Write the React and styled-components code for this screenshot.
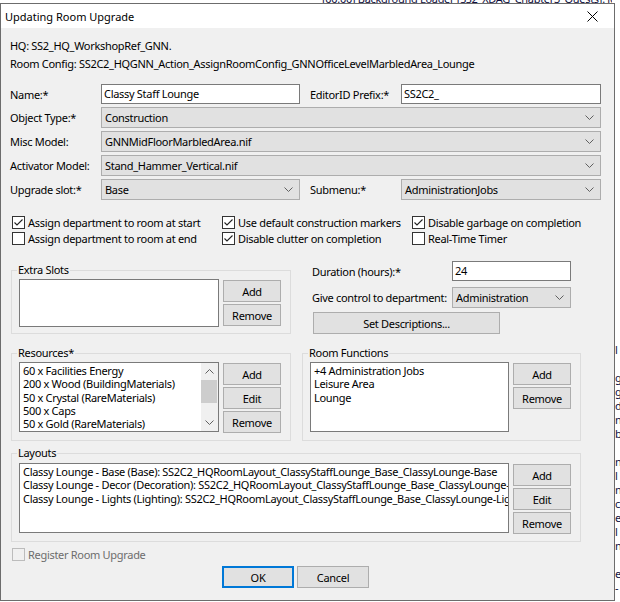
import React from 'react';
import styled, { createGlobalStyle } from 'styled-components';

const uiFont = '"Noto Sans", "DejaVu Sans", sans-serif';

const GlobalStyle = createGlobalStyle`
  html, body {
    margin: 0;
    padding: 0;
    background: #ffffff;
  }
  body {
    font-family: ${uiFont};
    font-size: 11px;
    letter-spacing: -0.3px;
    color: #000;
    overflow: hidden;
  }
  #root {
    position: relative;
    width: 620px;
    height: 602px;
    overflow: hidden;
  }
`;

// bits of the log window behind the dialog
const BgTop = styled.div`
  position: absolute;
  left: 322px;
  top: 0;
  width: 290px;
  height: 3px;
  overflow: hidden;
  color: #101040;
  white-space: nowrap;
`;

const BgTopText = styled.div`
  margin-top: -8px;
  line-height: 13px;
`;

const BgStrip = styled.div`
  position: absolute;
  left: 615px;
  top: 343px;
  width: 5px;
  overflow: hidden;
  line-height: 14px;
  color: #101040;
  white-space: pre;
`;

const Window = styled.div`
  position: absolute;
  left: 0;
  top: 3px;
  width: 615px;
  height: 598px;
  box-sizing: border-box;
  border: 1px solid #6c6c6c;
  background: #f0f0f0;
  display: flex;
  flex-direction: column;
`;

const TitleBar = styled.div`
  height: 24px;
  background: #ffffff;
  display: flex;
  align-items: center;
  justify-content: space-between;
  padding-left: 4px;
  letter-spacing: 0;
`;

const CloseBtn = styled.div`
  width: 46px;
  height: 24px;
  display: flex;
  align-items: center;
  justify-content: center;
  margin-right: -1px;
`;

const Body = styled.div`
  flex: 1;
  padding: 9px 9px 0 9px;
`;

const InfoLine = styled.div`
  height: 18px;
  line-height: 18px;
  white-space: nowrap;
`;

const Form = styled.div`
  margin-top: 11px;
  display: flex;
  flex-direction: column;
  gap: 3px;
`;

const Row = styled.div`
  display: flex;
  align-items: center;
  height: ${p => p.$h || 21}px;
`;

const Label = styled.div`
  width: ${p => p.$w || 91}px;
  margin-left: ${p => p.$ml || 0}px;
  flex-shrink: 0;
  white-space: nowrap;
`;

const TextInput = styled.div`
  width: ${p => p.$w}px;
  height: 20px;
  box-sizing: border-box;
  border: 1px solid #7a7a7a;
  background: #ffffff;
  padding-left: 2px;
  line-height: 18px;
  white-space: nowrap;
`;

const Combo = styled.div`
  width: ${p => p.$w}px;
  height: 21px;
  box-sizing: border-box;
  border: 1px solid #adadad;
  background: #e1e1e1;
  display: flex;
  align-items: center;
  justify-content: space-between;
  padding: 0 6px 0 3px;
  white-space: nowrap;
`;

const Chevron = ({ up }) => (
  <svg width="9" height="5" viewBox="0 0 9 5">
    <polyline
      points={up ? '0.5,4.5 4.5,0.5 8.5,4.5' : '0.5,0.5 4.5,4.5 8.5,0.5'}
      fill="none"
      stroke="#606060"
      strokeWidth="1"
    />
  </svg>
);

const ComboBox = ({ w, value }) => (
  <Combo $w={w}>
    <span>{value}</span>
    <Chevron />
  </Combo>
);

const Checks = styled.div`
  margin-top: 14px;
  padding-left: 2px;
  display: grid;
  grid-template-columns: 210px 190px 1fr;
  grid-auto-rows: 16px;
`;

const CheckRow = styled.div`
  display: flex;
  align-items: center;
  gap: 3px;
  white-space: nowrap;
  color: ${p => (p.$disabled ? '#6d6d6d' : '#000')};
`;

const Box = styled.div`
  width: 13px;
  height: 13px;
  box-sizing: border-box;
  border: 1px solid ${p => (p.$disabled ? '#bcbcbc' : '#333333')};
  background: ${p => (p.$disabled ? '#f0f0f0' : '#ffffff')};
  display: flex;
  align-items: center;
  justify-content: center;
`;

const CheckBox = ({ checked, disabled, children }) => (
  <CheckRow $disabled={disabled}>
    <Box $disabled={disabled}>
      {checked && (
        <svg width="11" height="11" viewBox="0 0 11 11">
          <polyline points="1.5,5.5 4,8 9.5,2.5" fill="none" stroke="#222" strokeWidth="1.1" />
        </svg>
      )}
    </Box>
    {children}
  </CheckRow>
);

const Section = styled.div`
  display: flex;
  margin-top: ${p => p.$mt}px;
  gap: ${p => p.$gap || 0}px;
  padding-left: 1px;
`;

const Group = styled.fieldset`
  margin: 0;
  padding: 0;
  width: ${p => p.$w}px;
  box-sizing: border-box;
  border: 1px solid #dcdcdc;
  border-radius: 0;
  min-width: 0;
`;

const Legend = styled.legend`
  padding: 0 1px;
  margin-left: 5px;
  line-height: 14px;
  font-size: 11px;
`;

const GroupInner = styled.div`
  display: flex;
  gap: 4px;
  padding: ${p => p.$pt || 2}px 9px ${p => p.$pb || 7}px 7px;
`;

const ListBox = styled.div`
  width: ${p => (p.$w ? `${p.$w}px` : 'auto')};
  flex: ${p => (p.$w ? 'none' : 1)};
  height: ${p => p.$h}px;
  box-sizing: border-box;
  border: 1px solid #7a7a7a;
  background: #ffffff;
  display: flex;
  overflow: hidden;
`;

const Items = styled.div`
  flex: 1;
  min-width: 0;
  overflow: hidden;
  padding: 1px 0 0 3px;
`;

const Item = styled.div`
  height: 13.3px;
  line-height: 13px;
  white-space: nowrap;
`;

const ScrollBar = styled.div`
  width: 17px;
  background: #f0f0f0;
  display: flex;
  flex-direction: column;
`;

const ScrollArrow = styled.div`
  height: 17px;
  display: flex;
  align-items: center;
  justify-content: center;
`;

const Track = styled.div`
  flex: 1;
`;

const Thumb = styled.div`
  height: 23px;
  margin: 0 1px 0 0;
  background: #cdcdcd;
`;

const ButtonCol = styled.div`
  display: flex;
  flex-direction: column;
  gap: 2px;
  padding-top: 1px;
`;

const Button = styled.div`
  width: ${p => p.$w || 58}px;
  height: 22px;
  box-sizing: border-box;
  border: ${p => (p.$default ? '2px solid #0078d7' : '1px solid #adadad')};
  background: #e1e1e1;
  display: flex;
  align-items: center;
  justify-content: center;
  white-space: nowrap;
  margin-left: ${p => p.$ml || 0}px;
`;

const RightCol = styled.div`
  display: flex;
  flex-direction: column;
  margin-top: -2px;
`;

const Footer = styled.div`
  display: flex;
  gap: 3px;
  margin-top: 5px;
  padding-left: 212px;
`;

const RegisterRow = styled.div`
  margin-top: 5px;
  height: 14px;
  padding-left: 2px;
  display: flex;
  align-items: center;
`;

const stripBits = ['l', '', 'g', 'g', 'd', 'n', 'b', '', 'n', 'l', 'n', 'c', 'ef', 'l', 'n', '', 'e', '-'];

const resources = [
  '60 x Facilities Energy',
  '200 x Wood (BuildingMaterials)',
  '50 x Crystal (RareMaterials)',
  '500 x Caps',
  '50 x Gold (RareMaterials)',
  '20 x Cloth (BuildingMaterials)',
];

const layouts = [
  'Classy Lounge - Base (Base): SS2C2_HQRoomLayout_ClassyStaffLounge_Base_ClassyLounge-Base',
  'Classy Lounge - Decor (Decoration): SS2C2_HQRoomLayout_ClassyStaffLounge_Base_ClassyLounge-Decor',
  'Classy Lounge - Lights (Lighting): SS2C2_HQRoomLayout_ClassyStaffLounge_Base_ClassyLounge-Lights',
];

export default function App() {
  return (
    <>
      <GlobalStyle />
      <BgTop>
        <BgTopText>[00:00] Background Loader [SS2_XDAG_Chapter3_Quests]: loading</BgTopText>
      </BgTop>
      <BgStrip>{stripBits.join('\n')}</BgStrip>
      <Window>
        <TitleBar>
          <span>Updating Room Upgrade</span>
          <CloseBtn>
            <svg width="11" height="11" viewBox="0 0 11 11">
              <path d="M0.5 0.5 L10.5 10.5 M10.5 0.5 L0.5 10.5" stroke="#000" strokeWidth="1" />
            </svg>
          </CloseBtn>
        </TitleBar>
        <Body>
          <InfoLine>HQ: SS2_HQ_WorkshopRef_GNN.</InfoLine>
          <InfoLine>Room Config: SS2C2_HQGNN_Action_AssignRoomConfig_GNNOfficeLevelMarbledArea_Lounge</InfoLine>

          <Form>
            <Row $h={20}>
              <Label>Name:*</Label>
              <TextInput $w={199}>Classy Staff Lounge</TextInput>
              <Label $ml={10}>EditorID Prefix:*</Label>
              <TextInput $w={200}>SS2C2_</TextInput>
            </Row>
            <Row>
              <Label>Object Type:*</Label>
              <ComboBox w={500} value="Construction" />
            </Row>
            <Row>
              <Label>Misc Model:</Label>
              <ComboBox w={500} value="GNNMidFloorMarbledArea.nif" />
            </Row>
            <Row>
              <Label>Activator Model:</Label>
              <ComboBox w={500} value="Stand_Hammer_Vertical.nif" />
            </Row>
            <Row>
              <Label>Upgrade slot:*</Label>
              <ComboBox w={199} value="Base" />
              <Label $ml={10}>Submenu:*</Label>
              <ComboBox w={200} value="AdministrationJobs" />
            </Row>
          </Form>

          <Checks>
            <CheckBox checked>Assign department to room at start</CheckBox>
            <CheckBox checked>Use default construction markers</CheckBox>
            <CheckBox checked>Disable garbage on completion</CheckBox>
            <CheckBox>Assign department to room at end</CheckBox>
            <CheckBox checked>Disable clutter on completion</CheckBox>
            <CheckBox>Real-Time Timer</CheckBox>
          </Checks>

          <Section $mt={17} $gap={21}>
            <Group $w={280}>
              <Legend>Extra Slots</Legend>
              <GroupInner $pb={6}>
                <ListBox $w={200} $h={48} />
                <ButtonCol>
                  <Button>Add</Button>
                  <Button>Remove</Button>
                </ButtonCol>
              </GroupInner>
            </Group>
            <RightCol>
              <Row $h={20}>
                <Label $w={140}>Duration (hours):*</Label>
                <TextInput $w={119}>24</TextInput>
              </Row>
              <Row style={{ marginTop: 6 }}>
                <Label $w={140}>Give control to department:</Label>
                <ComboBox w={119} value="Administration" />
              </Row>
              <Button $w={187} $ml={1} style={{ marginTop: 4 }}>Set Descriptions...</Button>
            </RightCol>
          </Section>

          <Section $mt={12} $gap={11}>
            <Group $w={280}>
              <Legend>Resources*</Legend>
              <GroupInner>
                <ListBox $w={200} $h={70}>
                  <Items>
                    {resources.map(r => <Item key={r}>{r}</Item>)}
                  </Items>
                  <ScrollBar>
                    <ScrollArrow><Chevron up /></ScrollArrow>
                    <Track><Thumb /></Track>
                    <ScrollArrow><Chevron /></ScrollArrow>
                  </ScrollBar>
                </ListBox>
                <ButtonCol>
                  <Button>Add</Button>
                  <Button>Edit</Button>
                  <Button>Remove</Button>
                </ButtonCol>
              </GroupInner>
            </Group>
            <Group $w={279}>
              <Legend>Room Functions</Legend>
              <GroupInner>
                <ListBox $h={70}>
                  <Items>
                    <Item>+4 Administration Jobs</Item>
                    <Item>Leisure Area</Item>
                    <Item>Lounge</Item>
                  </Items>
                </ListBox>
                <ButtonCol>
                  <Button>Add</Button>
                  <Button>Remove</Button>
                </ButtonCol>
              </GroupInner>
            </Group>
          </Section>

          <Section $mt={5}>
            <Group $w={570}>
              <Legend>Layouts</Legend>
              <GroupInner $pt={3}>
                <ListBox $h={70}>
                  <Items>
                    {layouts.map(l => <Item key={l}>{l}</Item>)}
                  </Items>
                </ListBox>
                <ButtonCol>
                  <Button>Add</Button>
                  <Button>Edit</Button>
                  <Button>Remove</Button>
                </ButtonCol>
              </GroupInner>
            </Group>
          </Section>

          <RegisterRow>
            <CheckBox disabled>Register Room Upgrade</CheckBox>
          </RegisterRow>

          <Footer>
            <Button $w={72} $default>OK</Button>
            <Button $w={72}>Cancel</Button>
          </Footer>
        </Body>
      </Window>
    </>
  );
}
